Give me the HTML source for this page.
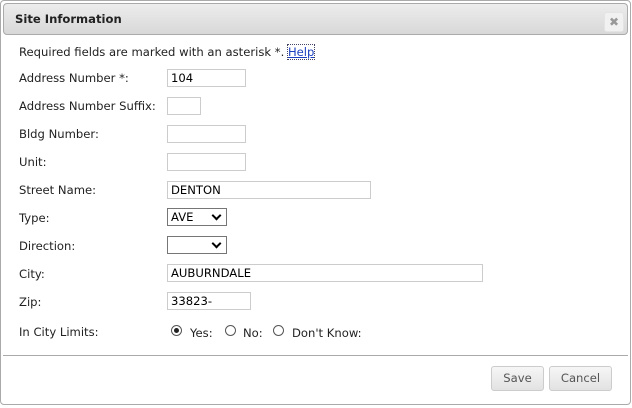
<!DOCTYPE html>
<html><head><style>
body{margin:0;width:632px;height:408px;background:#fff;font-family:Tahoma,"DejaVu Sans","Liberation Sans",sans-serif;font-size:11.6px;color:#222;position:relative;overflow:hidden}
.dlg{position:absolute;left:0;top:0;width:629px;height:403px;border:1px solid #aaa;border-radius:4px;background:#fff}
.bar{position:absolute;left:3px;top:3px;width:623px;height:30px;border:1px solid #aaa;border-radius:4px;background:linear-gradient(#ececec,#d8d8d8)}
.bar b{position:absolute;left:11px;top:8px;font-size:11.6px;color:#222}
.x{position:absolute;left:600px;top:8px;width:18px;height:18px;border-radius:3px;background:#f1f1f1;border:1px solid #e4e4e4;color:#999;font-size:12px;font-weight:bold;text-align:center;line-height:18px}
.a{position:absolute;white-space:nowrap}
.i{position:absolute;border:1px solid #ccc;box-sizing:border-box;height:18px;font-size:11.6px;line-height:16px;padding-left:3px;color:#000}
.s{position:absolute;border:1px solid #767676;box-sizing:border-box;height:18px;font-size:11.6px;line-height:16px;padding-left:3px;color:#000}
.s:after{content:"";position:absolute;right:6px;top:3px;width:5px;height:5px;border-right:2px solid #000;border-bottom:2px solid #000;transform:rotate(45deg)}
.r{position:absolute;width:11px;height:11px;border:1px solid #555;border-radius:50%;box-sizing:border-box}
.r.on:after{content:"";position:absolute;left:2px;top:2px;width:5px;height:5px;border-radius:50%;background:#222}
.btn{position:absolute;top:366px;height:25px;box-sizing:border-box;border:1px solid #ccc;border-radius:3px;background:linear-gradient(#f6f6f6,#e2e2e2);color:#555;font-size:11.6px;text-align:center;line-height:23px}
</style></head><body>
<div class="dlg"></div>
<div class="bar"><b>Site Information</b><div class="x">✖</div></div>
<div class="a" style="left:19px;top:45px">Required fields are marked with an asterisk *. <span style="color:#1a3fbf;text-decoration:underline;outline:1px dotted #446">Help</span></div>
<div class="a" style="left:19px;top:71px">Address Number *:</div><div class="i" style="left:167px;top:69px;width:79px">104</div>
<div class="a" style="left:19px;top:99px">Address Number Suffix:</div><div class="i" style="left:167px;top:97px;width:34px"></div>
<div class="a" style="left:19px;top:127px">Bldg Number:</div><div class="i" style="left:167px;top:125px;width:79px"></div>
<div class="a" style="left:19px;top:155px">Unit:</div><div class="i" style="left:167px;top:153px;width:79px"></div>
<div class="a" style="left:19px;top:183px">Street Name:</div><div class="i" style="left:167px;top:181px;width:204px">DENTON</div>
<div class="a" style="left:19px;top:211px">Type:</div><div class="s" style="left:167px;top:208px;width:60px">AVE</div>
<div class="a" style="left:19px;top:239px">Direction:</div><div class="s" style="left:167px;top:236px;width:60px"></div>
<div class="a" style="left:19px;top:267px">City:</div><div class="i" style="left:167px;top:264px;width:316px">AUBURNDALE</div>
<div class="a" style="left:19px;top:295px">Zip:</div><div class="i" style="left:167px;top:292px;width:84px">33823-</div>
<div class="a" style="left:19px;top:325px">In City Limits:</div>
<div class="r on" style="left:171px;top:325px"></div><div class="a" style="left:190px;top:326px">Yes:</div>
<div class="r" style="left:225px;top:325px"></div><div class="a" style="left:243px;top:326px">No:</div>
<div class="r" style="left:273px;top:325px"></div><div class="a" style="left:292px;top:326px">Don't Know:</div>
<div style="position:absolute;left:3px;top:355px;width:625px;height:1px;background:#aaa"></div>
<div class="btn" style="left:491px;width:53px">Save</div>
<div class="btn" style="left:549px;width:63px">Cancel</div>
</body></html>
